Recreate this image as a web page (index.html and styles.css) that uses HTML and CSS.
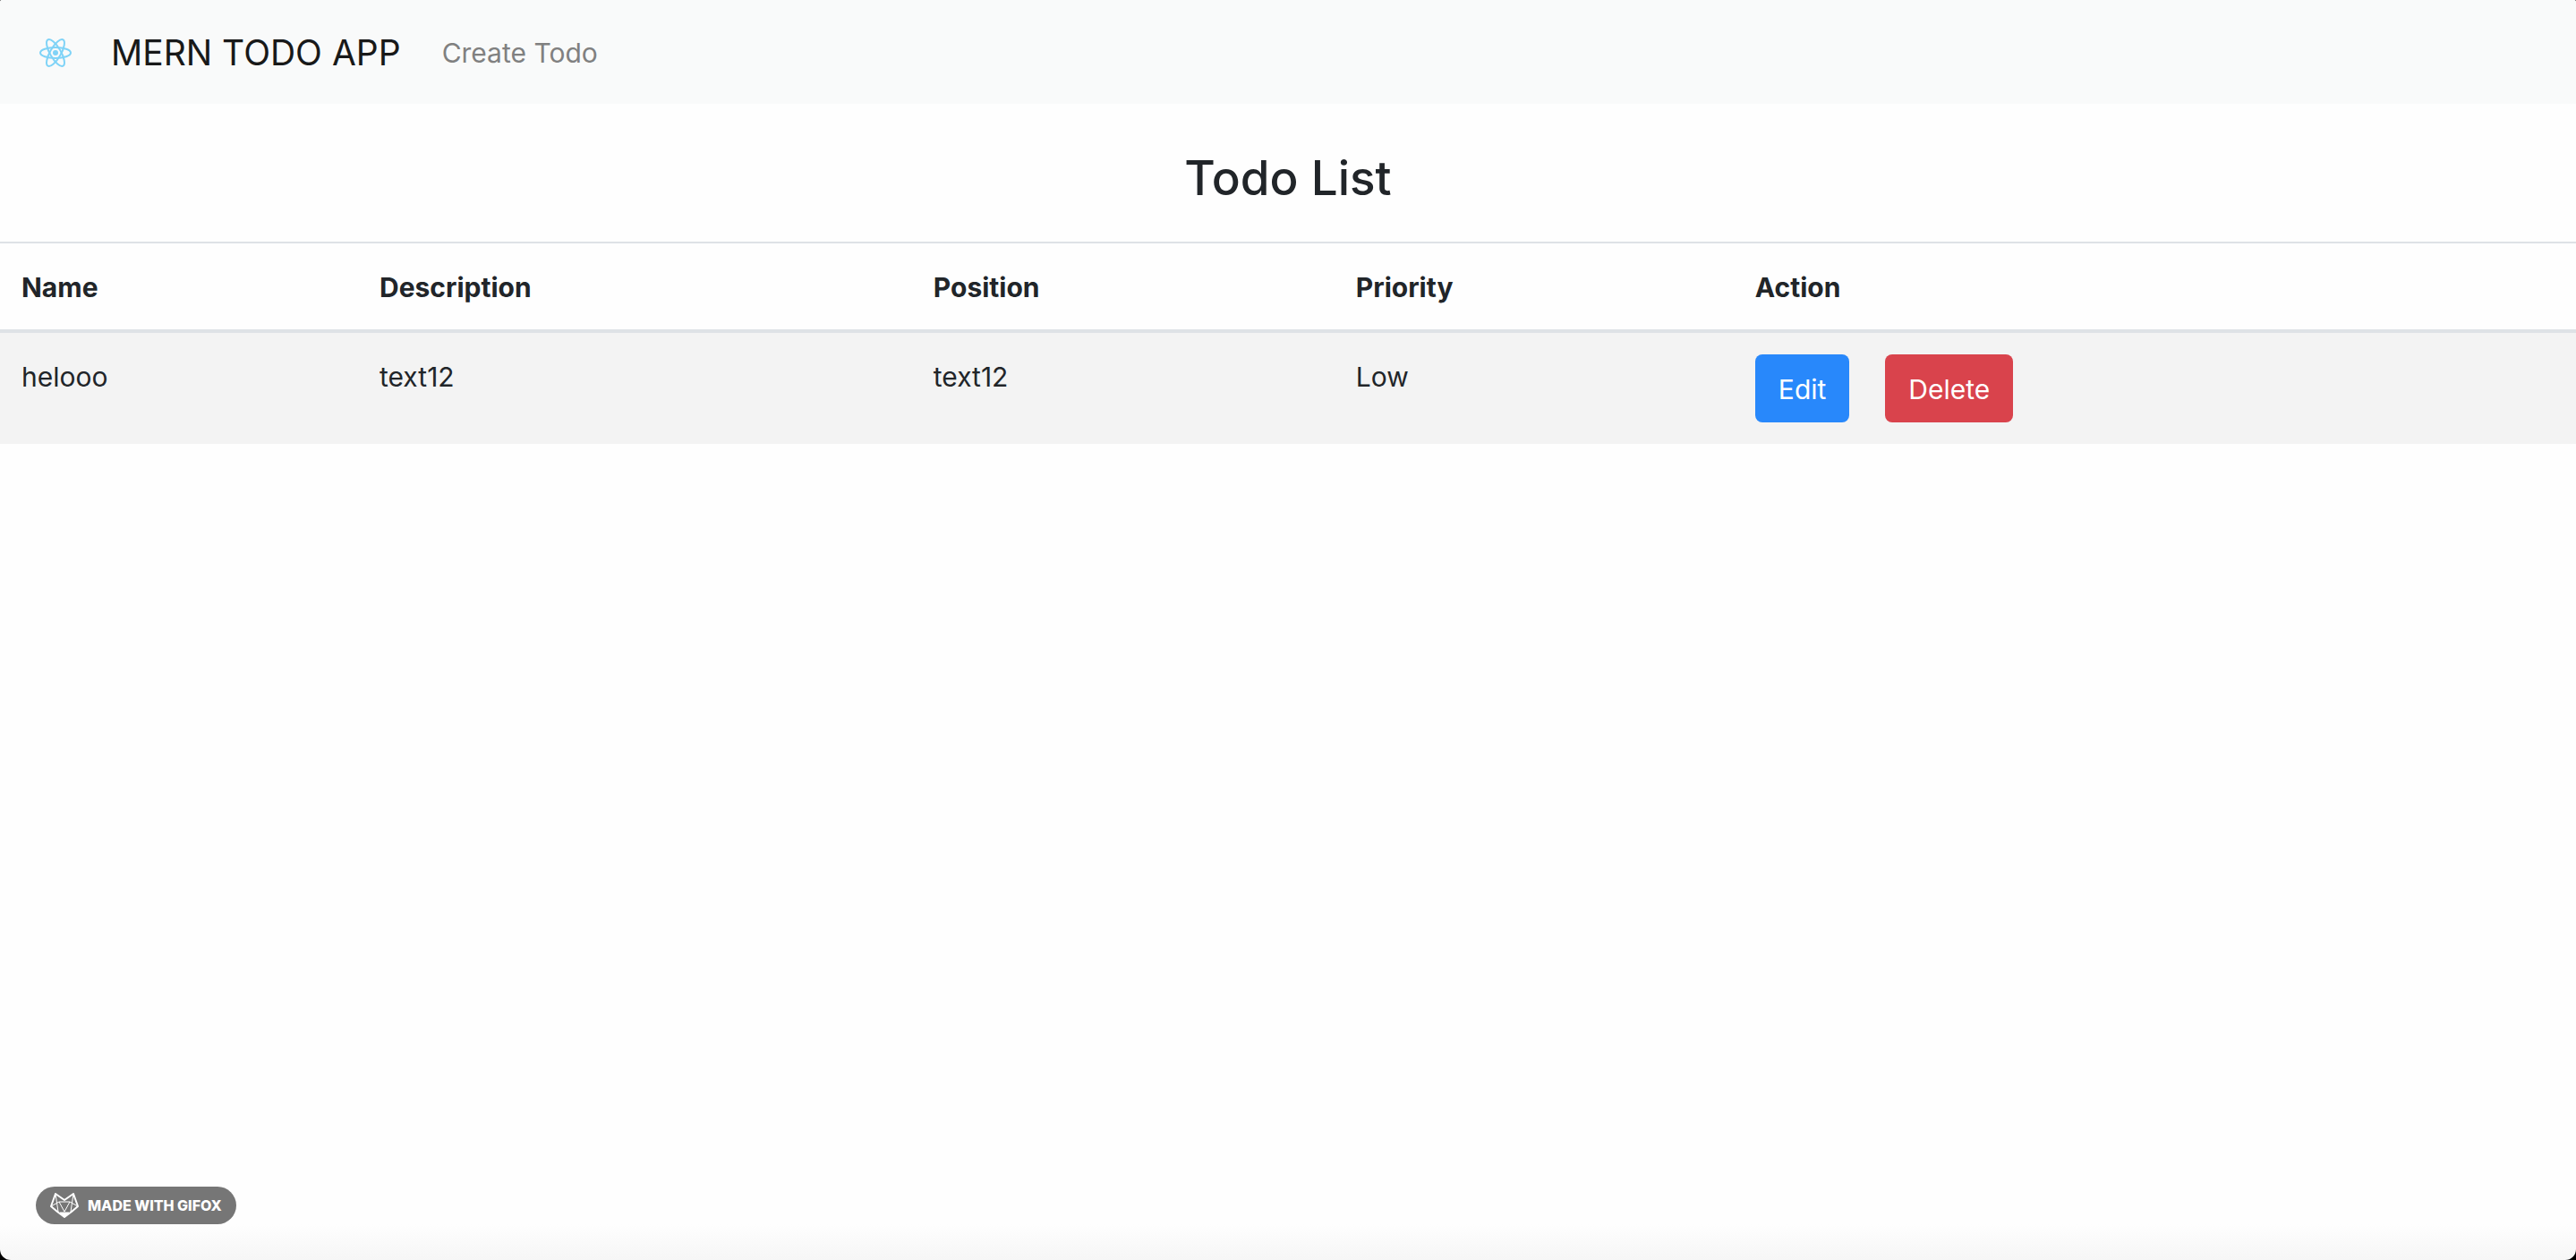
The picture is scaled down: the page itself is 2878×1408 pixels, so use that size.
FILE: index.html
```html
<!DOCTYPE html>
<html lang="en">
<head>
  <meta charset="utf-8">
  <title>MERN Todo App</title>
  <link rel="stylesheet" href="styles.css">
</head>
<body>
  <div class="page">
    <nav class="navbar">
      <a class="navbar-logo" href="#" aria-label="React">
        <svg class="logo" viewBox="0 0 60 40" fill="none" stroke="#7fd3f7" stroke-width="2">
          <ellipse cx="30" cy="20" rx="17" ry="6"/>
          <ellipse cx="30" cy="20" rx="17" ry="6" transform="rotate(60 30 20)"/>
          <ellipse cx="30" cy="20" rx="17" ry="6" transform="rotate(120 30 20)"/>
          <circle cx="30" cy="20" r="3" fill="#7fd3f7" stroke="none"/>
        </svg>
      </a>
      <a class="navbar-brand" href="#">MERN TODO APP</a>
      <a class="nav-link" href="#">Create Todo</a>
    </nav>
    <main>
      <h1 class="title">Todo List</h1>
      <table class="table">
        <colgroup>
          <col class="col-name"><col class="col-description"><col class="col-position"><col class="col-priority"><col>
        </colgroup>
        <thead>
          <tr><th>Name</th><th>Description</th><th>Position</th><th>Priority</th><th>Action</th></tr>
        </thead>
        <tbody>
          <tr>
            <td>helooo</td><td>text12</td><td>text12</td><td>Low</td>
            <td class="action-cell">
              <div class="actions">
                <button class="btn btn-primary" type="button">Edit</button>
                <button class="btn btn-danger" type="button">Delete</button>
              </div>
            </td>
          </tr>
        </tbody>
      </table>
    </main>
    <div class="badge">
      <svg class="fox" viewBox="0 0 32 28" fill="none" stroke="#fff" stroke-width="2" stroke-linejoin="round">
        <path d="M6 1 16 8 26 1 31 15 24 21 16 27 8 21 1 15Z"/>
        <path d="M6 1 9 21M26 1 23 21M1 15 10 10H22L31 15M10 10 16 21 22 10" stroke-width="1"/>
        <path d="M11 22h10l-5 5Z" fill="#fff" stroke-width="1"/>
      </svg>
      <span>MADE WITH GIFOX</span>
    </div>
  </div>
</body>
</html>
```
FILE: styles.css
```css
* {
  box-sizing: border-box;
}

html {
  background: #000;
}

body {
  margin: 0;
  color: #212529;
  font: 400 30px/48px Inter, "Liberation Sans", sans-serif;
}

.page {
  min-height: 100vh;
  border-radius: 2px 2px 12px 12px;
  background: linear-gradient(to top, #f6f6f6, #fefefe 40px);
}

.navbar {
  display: flex;
  align-items: center;
  padding: 17px 32px 15px;
  min-height: 116px;
  border-radius: 2px 2px 0 0;
  background: #f9fafa;
}

.navbar a {
  text-decoration: none;
}

.navbar-logo {
  display: flex;
  margin-right: 32px;
}

.logo {
  width: 60px;
  height: 40px;
}

.navbar-brand {
  margin-right: 46px;
  color: #181919;
  font-size: 39px;
  line-height: 60px;
}

.nav-link {
  color: #808080;
}

.title {
  margin: 0;
  padding: 50px 0 38px;
  font-size: 53px;
  font-weight: 500;
  line-height: 66px;
  text-align: center;
}

.table {
  width: 100%;
  table-layout: fixed;
  border-collapse: separate;
  border-spacing: 0;
}

.col-name {
  width: 13.9%;
}

.col-description {
  width: 21.5%;
}

.col-position {
  width: 16.4%;
}

.col-priority {
  width: 15.5%;
}

.table th,
.table td {
  padding: 25px 24px 23px;
  text-align: left;
  vertical-align: top;
}

.table th {
  border-top: 2px solid #dee2e6;
  border-bottom: 4px solid #dee2e6;
  font-weight: 700;
}

.table td {
  background: #f3f3f3;
}

.table .action-cell {
  padding: 24px;
}

.actions {
  display: flex;
  gap: 40px;
}

.btn {
  padding: 15px 26px 13px;
  border: 0;
  border-radius: 8px;
  color: #fff;
  font: inherit;
}

.btn-primary {
  background: #2888fb;
}

.btn-danger {
  background: #d9434c;
}

.badge {
  position: fixed;
  bottom: 40px;
  left: 40px;
  display: flex;
  align-items: center;
  gap: 10px;
  height: 42px;
  padding: 0 16px;
  border-radius: 21px;
  background: #767676;
  color: #fff;
  font-size: 16px;
  font-weight: 800;
  line-height: 20px;
}

.fox {
  width: 32px;
  height: 28px;
}
```
